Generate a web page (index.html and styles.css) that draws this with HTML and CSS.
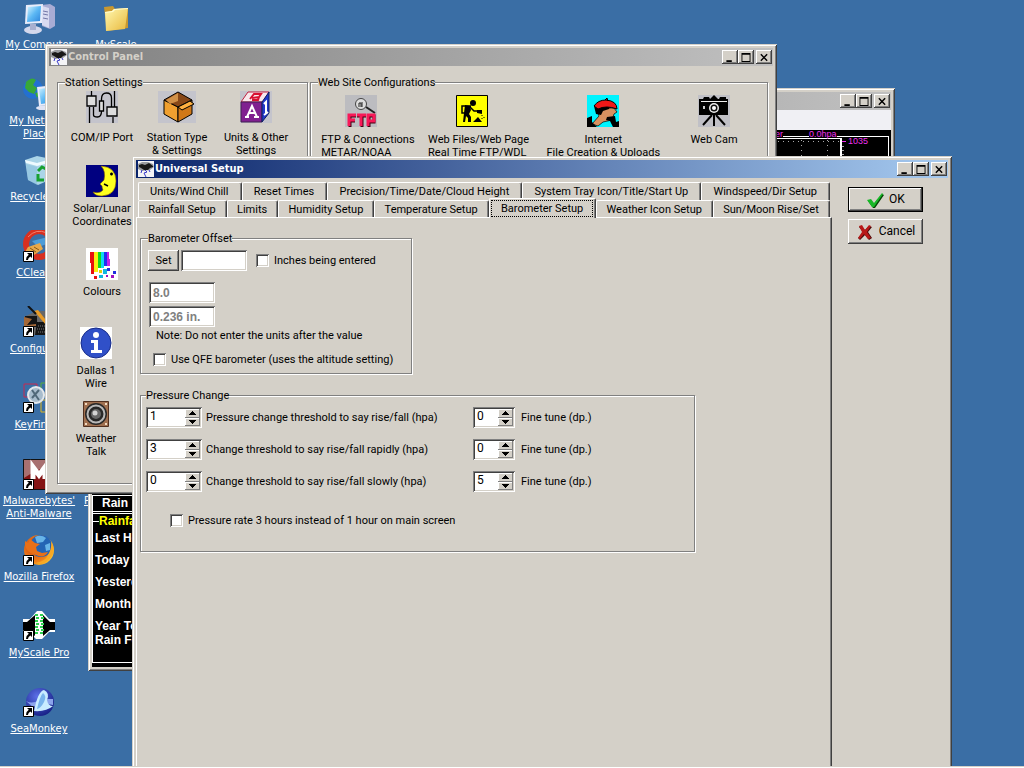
FILE: index.html
```html
<!DOCTYPE html>
<html lang="en">
<head>
<meta charset="utf-8">
<title>Universal Setup</title>
<link rel="stylesheet" href="styles.css">
</head>
<body>
<svg class="defs" aria-hidden="true">
  <symbol id="arrow" viewBox="0 0 11 11"><path fill="#fff" stroke="#000" d="M.5.5h10v10H.5z"/><path d="M4 2h5v5L7.500 5.500Q5 6.500 5 9H3Q3 5.500 5.800 3.800z"/></symbol>
  <symbol id="storm" viewBox="0 0 16 16"><path fill="#f4f4f6" d="M0 0h16v16H0z"/><path fill="#9a9ca0" d="M0 3l4-2h6l5 2 1 3-4 3-8 1-4-2z"/><path fill="#181818" d="M1 4l3-1 3 1 4-2 4 3v1l-3 1-2 2H6L3 7 1 6z"/><path fill="none" stroke="#3838c8" d="M7 9l2 2-3 1 2 4M4 9l-1 3M11 9l1 2"/></symbol>
  <symbol id="win-min" viewBox="0 0 12 10"><path d="M2 8h6v2H2z"/></symbol>
  <symbol id="win-max" viewBox="0 0 12 10"><path fill-rule="evenodd" d="M1 0h10v10H1zM2 2v7h8V2z"/></symbol>
  <symbol id="win-close" viewBox="0 0 12 10"><path fill="none" stroke="#000" stroke-width="1.600" d="M2.500 1.500l7 7M9.500 1.500l-7 7"/></symbol>
  <symbol id="up" viewBox="0 0 7 4"><path d="M3 0h1v1h1v1h1v1h1v1H0V3h1V2h1V1h1z"/></symbol>
  <symbol id="down" viewBox="0 0 7 4"><path d="M3 4h1V3h1V2h1V1h1V0H0v1h1v1h1v1h1z"/></symbol>
  <linearGradient id="screen" x1="0" y1="0" x2="1" y2="1"><stop offset="0" stop-color="#d4f4ff"/><stop offset=".5" stop-color="#5cb8f4"/><stop offset="1" stop-color="#2c84dc"/></linearGradient>
  <linearGradient id="folder" x1="0" y1="0" x2="1" y2="1"><stop offset="0" stop-color="#fff8b0"/><stop offset="1" stop-color="#e8b83c"/></linearGradient>
  <radialGradient id="navy" cx=".4" cy=".3" r=".8"><stop offset="0" stop-color="#5c70e8"/><stop offset="1" stop-color="#10187c"/></radialGradient>
  <radialGradient id="fox" cx=".35" cy=".4" r=".7"><stop offset="0" stop-color="#c84010"/><stop offset=".7" stop-color="#f08018"/><stop offset="1" stop-color="#fcc830"/></radialGradient>
</svg>

<main class="desktop">
  <nav class="shortcuts" aria-label="Desktop">
    <a class="shortcut" href="#"><svg viewBox="0 0 32 32"><path fill="#a8acd4" d="M19 3l8-1 5 3v19l-5 3-8-3z"/><path fill="#d8daf0" d="M19 4l7 2v20l-7-3z"/><path stroke="#7478a8" d="M20 9l5 1M20 12l5 1M20 16l5 1"/><ellipse cx="10" cy="28" rx="9" ry="4" fill="#d4d8ec"/><path fill="#a8b0d0" d="M7 22h6v6H7z"/><path fill="#e8ecfa" d="M3 3l17-1-1 19-17 1z"/><path fill="url(#screen)" d="M5 5l13-1-1 15-13 1z"/></svg><span>My Computer</span></a>
    <a class="shortcut" href="#"><svg viewBox="0 0 32 32"><circle cx="10" cy="11" r="10" fill="#2470d0"/><path fill="#38a838" d="M3 4q6-6 10-2l-3 5 4 3-3 6-5-2-4-4zM12 15l5-1-3 6z"/><path fill="#e8ecfa" d="M14 9l18-2v20l-16 1z"/><path fill="url(#screen)" d="M16 11l16-2v15l-14 2z"/><ellipse cx="22" cy="30" rx="9" ry="2.500" fill="#e0e4f4"/></svg><span>My Network Places</span></a>
    <a class="shortcut" href="#"><svg viewBox="0 0 32 32"><path fill="#b8e0f0" opacity=".9" d="M2 6l12-4 14 3-4 22-9 4-10-5z"/><path fill="#eefaff" d="M2 6l12 3 14-4-2 4-12 3-11-3z"/><path fill="#84bcdc" d="M3 10l11 3v18l-9-5z" opacity=".5"/><path fill="none" stroke="#18a030" stroke-width="3" d="M15 17l4-4 4 2M15 20v6h6M25 17l1 5-3 3"/></svg><span>Recycle Bin</span></a>
    <a class="shortcut" href="#"><svg viewBox="0 0 32 32"><circle cx="16" cy="14" r="13" fill="none" stroke="#d83020" stroke-width="6"/><path fill="none" stroke="#f08070" d="M5 7q8-9 19-4"/><path fill="#4c9cd8" d="M9 11l16-4 2 6-12 4z"/><path fill="#e8a848" d="M5 17l12-4 3 6-9 6-9-3z"/><path stroke="#885818" d="M7 18l6 4M11 17l5 3"/><use href="#arrow" y="21" width="11" height="11"/></svg><span>CCleaner</span></a>
    <a class="shortcut" href="#"><svg viewBox="0 0 32 32"><path fill="#686868" d="M1 11l12-6h19v24H11z"/><path fill="#151515" d="M2 10h12v11H2zM14 16h18v13H12z"/><path fill="#a46838" d="M1 11l8 2-5 6 9-1v2H1z"/><path stroke="#787878" stroke-dasharray="1 1" d="M15 20h16M14 23h17M15 26h16"/><path fill="#e89c28" d="M11 5l4-1 11 14-3 1z"/><path stroke="#111" stroke-width="2" d="M5 0l8 8"/><use href="#arrow" y="20" width="11" height="11"/></svg><span>Configure...</span></a>
    <a class="shortcut" href="#"><svg viewBox="0 0 32 32"><path fill="none" stroke="#c82850" d="M1 2h13v13H1z"/><path fill="none" stroke="#58b038" d="M18 1h13v12H18z"/><path fill="none" stroke="#e0b820" d="M18 18h13v12H18z"/><circle cx="13" cy="13" r="8" fill="#a8bccc" stroke="#e4e8ec" stroke-width="2"/><path stroke="#506878" stroke-width="2" d="M9 8l7 10M16 8L9 16"/><use href="#arrow" y="20" width="11" height="11"/></svg><span>KeyFinder</span></a>
    <a class="shortcut" href="#"><svg viewBox="0 0 32 32"><path fill="#841414" stroke="#111" d="M.5 1.500h31v30H.5z"/><path fill="#a87070" d="M1 2h30v5Q17 9 1 20z"/><path fill="none" stroke="#fff" stroke-width="5" d="M10 21V9l6 8 6-8v12"/><use href="#arrow" y="21" width="11" height="11"/></svg><span>Malwarebytes' Anti-Malware</span></a>
    <a class="shortcut" href="#"><svg viewBox="0 0 32 32"><circle cx="16" cy="16" r="15" fill="url(#fox)"/><circle cx="18" cy="12" r="11" fill="#2464b4"/><path fill="#68b4e8" d="M12 3q6-3 11 1l-3 4-6 1zM22 11l5-2v7l-4 1z"/><path fill="#e87018" d="M2 7l3 2 2-4 5 4 5 1-4 3 1 4 5 2 6-1q-4 7-12 3Q1 18 2 7z"/><path fill="#f8a824" d="M28 7q6 10-2 18-6 6-13 4 10-2 12-8 4-6 3-14z"/><use href="#arrow" y="21" width="11" height="11"/></svg><span>Mozilla Firefox</span></a>
    <a class="shortcut" href="#"><svg viewBox="0 0 32 32"><path fill="#fff" d="M0 9h7l7-8h5l7 8h6v13h-6l-7 7h-6l-7-7H0z"/><path d="M0 12h4l8-7v21l-8-6H0zM32 12h-5l-7-7v21l7-6h5z"/><path fill="none" stroke="#30d050" stroke-width="2" stroke-dasharray="3 2" d="M12 5h8M13 8h8M12 11h8M13 14h8M12 17h8M13 20h8M12 23h8"/><use href="#arrow" y="20" width="11" height="11"/></svg><span>MyScale Pro</span></a>
    <a class="shortcut" href="#"><svg viewBox="0 0 32 32"><circle cx="17" cy="16" r="14" fill="url(#navy)"/><path fill="#8ca4ec" d="M3 15q7 4 14-2h13v6q-12-3-20 2z"/><path fill="#c8ecff" d="M11 25Q15 5 21 4q6 3 3 10 1 6 6 6-7 6-19 5z"/><path fill="#78b4ec" d="M20 7q4 3 1 9-3 6-7 7Q17 10 20 7z"/><use href="#arrow" y="20" width="11" height="11"/></svg><span>SeaMonkey</span></a>
  </nav>
  <nav class="shortcuts shortcuts-second" aria-label="Desktop, second column">
    <a class="shortcut" href="#"><svg viewBox="0 0 32 32"><path fill="#c89830" d="M4 5l9-1 2 3 13-1v20L7 29z"/><path fill="url(#folder)" d="M5 10l7-1 2-2 14-1-3 21-19 2z"/><path fill="#fffcd0" d="M5 10l7-1 2-2 14-1v1l-13 1-2 2-8 1z"/></svg><span>MyScale</span></a>
    <a class="shortcut shortcut-covered" href="#"><span>P</span></a>
  </nav>

  <section class="window window-main" aria-label="Weather display">
    <header class="titlebar titlebar-inactive">
      <span class="title"></span>
      <button class="winbtn" aria-label="Minimize"><svg><use href="#win-min"/></svg></button>
      <button class="winbtn" aria-label="Maximize"><svg><use href="#win-max"/></svg></button>
      <button class="winbtn winbtn-close" aria-label="Close"><svg><use href="#win-close"/></svg></button>
    </header>
    <div class="menu-strip"></div>
    <div class="display">
      <svg class="chart" viewBox="0 0 118 180" shape-rendering="crispEdges">
        <path fill="none" stroke="#fff" d="M10 6.500h26M64 6.500h51.500V180"/>
        <path fill="none" stroke="#fff" d="M0 8.500h67"/>
        <path stroke="#fff" stroke-width="2" d="M68 8v172"/>
        <path stroke="#aaa" stroke-dasharray="1 4" d="M0 11.500h66M28.500 10v170M54.500 10v170"/>
        <path stroke="#f030f0" d="M69 11.500h4"/><path stroke="#aaa" d="M69 16.500h2M69 20.500h2M69 24.500h2"/>
        <text x="2" y="7">er</text><text x="36" y="7">0.0hpa</text><text x="75" y="14">1035</text>
      </svg>
      <div class="rain">
        <div class="rain-head">Rain</div>
        <fieldset class="rain-box"><legend>Rainfall</legend>
          <p>Last Hour</p><p>Today</p><p>Yesterday</p><p>Month</p><p>Year To<br>Rain For</p>
        </fieldset>
      </div>
    </div>
  </section>

  <section class="window window-panel" aria-label="Control Panel">
    <header class="titlebar titlebar-inactive">
      <svg class="title-icon"><use href="#storm"/></svg>
      <h2 class="title">Control Panel</h2>
      <button class="winbtn" aria-label="Minimize"><svg><use href="#win-min"/></svg></button>
      <button class="winbtn" aria-label="Maximize"><svg><use href="#win-max"/></svg></button>
      <button class="winbtn winbtn-close" aria-label="Close"><svg><use href="#win-close"/></svg></button>
    </header>
    <div class="panel-body">
      <fieldset class="group station-group">
        <legend>Station Settings</legend>
        <div class="station-grid">
          <button class="tool tool-top"><svg viewBox="0 0 32 32"><path fill="#c4c4cc" d="M0 0h32v32H0z"/><path fill="none" stroke="#000" stroke-width="1.300" d="M5.500 0v6M3.500 16v16M7.500 16v8q0 2 4 2 4 0 4-6V8q0-6 5-6t5 5v9M28.500 0v16M27 26v6"/><path fill="#ddd" stroke="#000" stroke-width="1.300" d="M1 5h9v10H1zM21 16h10v9H21zM13.500 10h4v10h-4z"/></svg><span>COM/IP Port</span></button>
          <button class="tool tool-top"><svg class="wide" viewBox="0 0 38 32"><path fill="#c4c4cc" d="M0 0h38v32H0z"/><path fill="#f0a030" stroke="#000" d="M6 9l14 7v15L6 23z"/><path fill="#d07818" stroke="#000" d="M20 16l14-7v14l-14 8z"/><path fill="#884818" stroke="#000" d="M6 9l14-8 14 8-14 7z"/><path fill="#d09048" d="M8 9l12-7v8l-8 3z"/><path fill="#ffb040" stroke="#000" d="M20 16l12-6 4 3-12 6z"/></svg><span>Station Type<br>&amp; Settings</span></button>
          <button class="tool tool-top"><svg viewBox="0 0 32 32"><path fill="#c4c4cc" d="M0 0h32v32H0z"/><path fill="#f8e8ec" stroke="#c02040" d="M1 11l7-10h21l-6 10z"/><path fill="none" stroke="#d81030" stroke-width="2" d="M10 8l4-5h7l-2 3-7 1M19 6l-1 3h-6"/><path fill="#802090" stroke="#402050" d="M1 11h21v20H1z"/><path fill="#2038c8" stroke="#102060" d="M22 11l7-10v21l-7 9z"/><path fill="none" stroke="#fff" stroke-width="2" d="M7 26l5-11 5 11M9 22h6M5 26h4M14 26h5M24 13l2-2v12M24 24l4-3"/></svg><span>Units &amp; Other<br>Settings</span></button>
          <button class="tool row-start"><svg viewBox="0 0 32 32"><path fill="#000080" d="M0 0h32v32H0z"/><path fill="#ffff20" d="M15 1q15 1 15 15 0 14-14 15-7 0-9-4 7 2 10-2-1-2-1-4l-2-2 4-4q2-9-3-14z" stroke="#806000" stroke-width=".6"/><path stroke="#000" stroke-width="1.500" d="M24 9h3M25.500 7.500v3M18 19l4 2"/></svg><span>Solar/Lunar<br>Coordinates</span></button>
          <button class="tool row-start"><svg viewBox="0 0 32 32" shape-rendering="crispEdges"><path fill="#fff" d="M0 0h32v32H0z"/><path fill="#e81010" d="M4 4h4v22H5z"/><path fill="#f8f010" d="M8 4h4v20H8z"/><path fill="#10d820" d="M12 4h3v16h-3z"/><path fill="#10d8f0" d="M15 4h3v16h-3z"/><path fill="#2030f0" d="M18 4h3v14h-3z"/><path fill="#c020e8" d="M21 4h2l1 14h-3z"/><path fill="#e81010" d="M8 28h3v3H8z"/><path fill="#e0d010" d="M13 22h3v3h-3z"/><path fill="#10b8e0" d="M17 21h4v5h-4zM13 27h4v3h-4z"/><path fill="#2030e0" d="M21 20h3v3h-3zM27 23h3v3h-3z"/><path fill="#a010c0" d="M25 27h3v3h-3zM20 27h2v2h-2z"/></svg><span>Colours</span></button>
          <button class="tool row-start tool-narrow"><svg viewBox="0 0 32 32"><path fill="#fff" d="M0 0h32v32H0z"/><circle cx="16" cy="16" r="15" fill="#3050c8" stroke="#182c88"/><circle cx="16" cy="8" r="3" fill="#fff"/><path fill="#fff" d="M11 13h7v10h4v3H11v-3h3v-7h-3z"/></svg><span>Dallas 1<br>Wire</span></button>
          <button class="tool row-start tool-narrow"><svg class="small" viewBox="0 0 26 26"><path fill="#a07050" stroke="#503020" d="M.5.500h25v25H.5z"/><circle cx="13" cy="13" r="11" fill="#282828"/><circle cx="13" cy="13" r="8.500" fill="none" stroke="#b8b8b8" stroke-width="2"/><circle cx="13" cy="13" r="5" fill="#686868"/><circle cx="12" cy="12" r="2.500" fill="#d4d4d4"/><path stroke="#f0d8c0" stroke-width="2" d="M2 3h2M22 3h2M2 23h2M22 23h2"/></svg><span>Weather<br>Talk</span></button>
        </div>
      </fieldset>
      <fieldset class="group web-group">
        <legend>Web Site Configurations</legend>
        <div class="web-grid">
          <button class="tool tool-left"><svg viewBox="0 0 32 32"><path fill="#bcbcc0" d="M0 0h32v32H0z"/><circle cx="16" cy="9" r="5.500" fill="#ddd" stroke="#444"/><path stroke="#222" fill="none" d="M14 12V8h2v4M17 7v5"/><path stroke="#222" stroke-width="2" d="M21 12l9 6"/><path fill="none" stroke="#400010" stroke-width="3" d="M5 32V21h6M5 26h5M12 21h9M17 21v11M24 32V21h5v6h-5"/><path fill="none" stroke="#f81858" stroke-width="3" d="M4 31V20h7M4 25h6M12 20h9M16 20v11M23 31V20h6v6h-6"/></svg><span>FTP &amp; Connections<br>METAR/NOAA</span></button>
          <button class="tool tool-left"><svg viewBox="0 0 32 32"><path fill="#ff0" stroke="#000" d="M.5.500h31v31H.5z"/><circle cx="17" cy="8" r="3"/><path d="M9 10l5 1 1 4-2 4 2 3v5h-3v-4l-2-2-1 6H7l1-9zM17 27l5-5 4 5zM21 15h5v4l-5-1z"/><path fill="none" stroke="#000" stroke-width="1.500" d="M15 11H6v7h4M13 11l5 5h6"/><path stroke="#000" stroke-dasharray="1 2" d="M26 20v6M28 22v3"/></svg><span>Web Files/Web Page<br>Real Time FTP/WDL</span></button>
          <button class="tool"><svg viewBox="0 0 32 32"><path fill="#00f4ff" d="M0 0h32v32H0z"/><path fill="#d89060" stroke="#000" stroke-width=".7" d="M9 13h18l3 4-3 2-2 6-9 2-5 4-6-2 7-8z"/><path d="M7 11h16l-1 3-6 2-2 4-5-1zM0 23l5-2v6l5 5H0zM20 22l8-1 1 6 3-1v6h-6l-3-6-4-1z"/><path fill="#f01818" stroke="#000" d="M7 11q4-6 12-6 11 1 11 9-11-4-19 0zM18 5l2-2 1 3"/></svg><span>Internet<br>File Creation &amp; Uploads</span></button>
          <button class="tool"><svg viewBox="0 0 32 32"><path fill="#c0c0c6" d="M0 0h32v32H0z"/><path d="M1 4h4l1-2h5l1 2 4-4 4 4h1l1-2h6v2h2v16H1z"/><path stroke="#eee" d="M3 6.500h26"/><circle cx="16" cy="13" r="5" fill="#eee"/><circle cx="16" cy="13" r="3.500" fill="#111"/><circle cx="16" cy="13" r="2" fill="#fff"/><path fill="#ccc" d="M5 11h2v3H5z"/><path stroke="#000" stroke-width="2" d="M14 20L5 30M16 20v11M18 20l9 10"/></svg><span>Web Cam</span></button>
        </div>
      </fieldset>
    </div>
  </section>

  <section class="window window-setup" aria-label="Universal Setup">
    <header class="titlebar titlebar-active">
      <svg class="title-icon"><use href="#storm"/></svg>
      <h1 class="title">Universal Setup</h1>
      <button class="winbtn" aria-label="Minimize"><svg><use href="#win-min"/></svg></button>
      <button class="winbtn" aria-label="Maximize"><svg><use href="#win-max"/></svg></button>
      <button class="winbtn winbtn-close" aria-label="Close"><svg><use href="#win-close"/></svg></button>
    </header>
    <div class="setup-body">
      <div class="tabbed">
        <div class="tabs" role="tablist" aria-label="Setup pages">
          <div class="tab-row" role="presentation">
            <button class="tab" role="tab">Units/Wind Chill</button><button class="tab" role="tab">Reset Times</button><button class="tab" role="tab">Precision/Time/Date/Cloud Height</button><button class="tab" role="tab">System Tray Icon/Title/Start Up</button><button class="tab" role="tab">Windspeed/Dir Setup</button>
          </div>
          <div class="tab-row" role="presentation">
            <button class="tab" role="tab">Rainfall Setup</button><button class="tab" role="tab">Limits</button><button class="tab" role="tab">Humidity Setup</button><button class="tab" role="tab">Temperature Setup</button><button class="tab tab-selected" role="tab" aria-selected="true"><span>Barometer Setup</span></button><button class="tab" role="tab">Weather Icon Setup</button><button class="tab" role="tab">Sun/Moon Rise/Set</button>
          </div>
        </div>
        <div class="page" role="tabpanel">
          <fieldset class="group offset-group">
            <legend>Barometer Offset</legend>
            <div class="offset-row">
              <button class="push set-button">Set</button>
              <input class="field" type="text" aria-label="Barometer offset">
              <label class="check"><input type="checkbox">Inches being entered</label>
            </div>
            <div class="readouts">
              <input class="field" type="text" value="8.0" aria-label="Offset in hpa" disabled>
              <input class="field" type="text" value="0.236 in." aria-label="Offset in inches" disabled>
            </div>
            <p class="note">Note: Do not enter the units after the value</p>
            <label class="check qfe"><input type="checkbox">Use QFE barometer (uses the altitude setting)</label>
          </fieldset>
          <fieldset class="group pressure-group">
            <legend>Pressure Change</legend>
            <div class="thresholds">
              <div class="spin"><input id="rise" type="text" value="1"><span class="arrows"><button aria-label="Up"><svg><use href="#up"/></svg></button><button aria-label="Down"><svg><use href="#down"/></svg></button></span></div>
              <label for="rise">Pressure change threshold to say rise/fall (hpa)</label>
              <div class="spin"><input id="rise-fine" type="text" value="0"><span class="arrows"><button aria-label="Up"><svg><use href="#up"/></svg></button><button aria-label="Down"><svg><use href="#down"/></svg></button></span></div>
              <label class="fine" for="rise-fine">Fine tune (dp.)</label>
              <div class="spin"><input id="rapid" type="text" value="3"><span class="arrows"><button aria-label="Up"><svg><use href="#up"/></svg></button><button aria-label="Down"><svg><use href="#down"/></svg></button></span></div>
              <label for="rapid">Change threshold to say rise/fall rapidly (hpa)</label>
              <div class="spin"><input id="rapid-fine" type="text" value="0"><span class="arrows"><button aria-label="Up"><svg><use href="#up"/></svg></button><button aria-label="Down"><svg><use href="#down"/></svg></button></span></div>
              <label class="fine" for="rapid-fine">Fine tune (dp.)</label>
              <div class="spin"><input id="slow" type="text" value="0"><span class="arrows"><button aria-label="Up"><svg><use href="#up"/></svg></button><button aria-label="Down"><svg><use href="#down"/></svg></button></span></div>
              <label for="slow">Change threshold to say rise/fall slowly (hpa)</label>
              <div class="spin"><input id="slow-fine" type="text" value="5"><span class="arrows"><button aria-label="Up"><svg><use href="#up"/></svg></button><button aria-label="Down"><svg><use href="#down"/></svg></button></span></div>
              <label class="fine" for="slow-fine">Fine tune (dp.)</label>
            </div>
            <label class="check rate"><input type="checkbox">Pressure rate 3 hours instead of 1 hour on main screen</label>
          </fieldset>
        </div>
      </div>
      <div class="actions">
        <button class="push action action-default"><svg viewBox="0 0 18 16"><path fill="#064806" d="M2 9l3-1 3 4L16 2l2 1L9 16H7z"/><path fill="#18b828" d="M1 8l4-1 3 4 8-10 1 1L8 15H6z"/></svg>OK</button>
        <button class="push action"><svg viewBox="0 0 18 16"><path fill="#480808" d="M4 2l5 4 4-4 3 1-4 5 4 6-3 2-4-5-5 5-2-2 5-6-4-5z"/><path fill="#b81818" d="M3 2l3-1 3 5 4-5 2 1-4 6 4 6-3 1-4-5-4 5-2-1 4-6z"/></svg>Cancel</button>
      </div>
    </div>
  </section>
  <div class="taskbar"></div>
</main>
</body>
</html>
```
FILE: styles.css
```css
:root {
  --face: #d4d0c8;
  --ui: Roboto, "Liberation Sans", Arial, sans-serif;
  --bold: "Liberation Sans", Arial, sans-serif;
  --shell: "DejaVu Sans", sans-serif;
  --caption: "DejaVu Sans Condensed", "DejaVu Sans", sans-serif;
}
* { box-sizing: border-box; }
body { margin: 0; background: #3a6ea5; font: 11px/13px var(--ui); color: #000; }
button, input { font: inherit; color: inherit; border-radius: 0; margin: 0; }
button { border: 0; padding: 0; background: none; }
fieldset { margin: 0; padding: 0; border: 0; min-width: 0; }
h1, h2, p { margin: 0; font: inherit; }
svg { display: block; flex: none; }
.defs { position: absolute; width: 0; height: 0; }
.desktop { position: relative; height: 100vh; overflow: hidden; }

/* desktop shortcuts */
.shortcuts { position: absolute; top: 2px; left: 0; width: 78px; display: grid; grid-auto-rows: 76px; }
.shortcuts-second { left: 78px; width: 76px; }
.shortcut { display: flex; flex-direction: column; align-items: center; gap: 4px; color: #fff; text-align: center; font: 10px/13px var(--shell); text-decoration: underline; }
.shortcut svg { width: 32px; height: 32px; }
.shortcut-covered { grid-row: 7; align-items: flex-start; padding: 36px 0 0 6px; }

/* window frame */
.window { position: absolute; display: flex; flex-direction: column; padding: 4px; background: var(--face);
  box-shadow: inset 1px 1px var(--face), inset -1px -1px #404040, inset 2px 2px #fff, inset -2px -2px #808080; }
.window-main { left: 88px; right: 129px; top: 88px; height: 583px; }
.window-panel { left: 45px; right: 247px; top: 44px; }
.window-setup { left: 132px; right: 72px; top: 156px; bottom: -4px; }
.titlebar { display: flex; align-items: center; height: 18px; padding: 0 1px 0 2px; flex: none; }
.titlebar-active { background: linear-gradient(90deg, #0a246a, #a6caf0); color: #fff; }
.titlebar-inactive { background: linear-gradient(90deg, #808080, #c0c0c0); color: var(--face); }
.title-icon { width: 16px; height: 16px; }
.title { flex: 1; padding-left: 1px; font: bold 11px/16px var(--caption); }
.winbtn { width: 16px; height: 14px; padding: 2px; background: var(--face);
  box-shadow: inset -1px -1px #404040, inset 1px 1px #fff, inset -2px -2px #808080; }
.winbtn svg { width: 12px; height: 9px; }
.winbtn-close { margin-left: 2px; }

/* groups */
.group { border: 1px solid #808080; box-shadow: 1px 1px #fff, inset 1px 1px #fff; }
.group > legend { margin-left: 7px; padding: 0; background: var(--face); }

/* control panel */
.panel-body { display: flex; gap: 2px; padding: 10px 5px 6px 8px; }
.station-group { width: 251px; }
.web-group { flex: 1; }
.station-grid { display: grid; grid-template-columns: 88px 62px 96px; grid-template-rows: 74px 83px 79px 74px 82px; padding-top: 2px; }
.row-start { grid-column: 1; }
.web-grid { display: grid; grid-template-columns: 114fr 108fr 142fr 80fr; padding: 6px 13px 0 0; }
.tool { display: flex; flex-direction: column; align-items: center; justify-content: flex-start; gap: 5px; white-space: nowrap; }
.tool svg { width: 32px; height: 32px; }
.tool svg.wide { width: 38px; }
.tool svg.small { width: 26px; height: 26px; }
.tool-top { gap: 8px; }
.tool-narrow { padding-right: 12px; }
.web-grid .tool { gap: 6px; }
.tool-left { text-align: left; }
.tool-left svg { margin-right: 14px; }

/* weather display */
.menu-strip { height: 20px; background: #f0f0f4; flex: none; }
.display { flex: 1; display: flex; flex-direction: column; align-items: flex-end; justify-content: space-between; background: #000; color: #fff; }
.chart { width: 118px; height: 180px; }
.chart text { font: 9px var(--bold); fill: #f030f0; }
.rain { align-self: stretch; font: bold 12px/14px var(--bold); border: 1px solid #fff; border-right: 0; margin-bottom: 4px; }
.rain-head { padding: 0 0 1px 9px; border-bottom: 3px double #fff; }
.rain-box { height: 148px; padding-left: 2px; border-top: 1px solid #fff; }
.rain-box legend { margin-left: 4px; padding: 0; color: #ff0; }
.rain-box p { margin: 3px 0 8px; }

/* universal setup */
.setup-body { flex: 1; display: flex; gap: 16px; padding: 4px 25px 0 0; }
.tabbed { flex: 1; display: flex; flex-direction: column; }
.tabs { margin-bottom: -1px; }
.tab-row { display: flex; padding: 0 2px; }
.tab { flex: 1 1 auto; height: 18px; padding-right: 1px; background: var(--face); white-space: nowrap;
  border-top: 1px solid #fff; border-left: 1px solid #fff; border-right: 1px solid #404040; border-radius: 2px 2px 0 0;
  box-shadow: inset -1px 0 #808080; }
.tab-selected { position: relative; height: 20px; margin-top: -2px; padding: 1px 2px 1px 1px; }
.tab-selected span { display: block; height: 17px; padding: 1px 0; border: 1px dotted #000; }
.page { flex: 1; display: flex; flex-direction: column; gap: 15px; align-items: flex-start; padding: 14px 3px 0;
  border-top: 1px solid #fff; border-left: 1px solid #fff; border-right: 1px solid #404040; box-shadow: inset -1px 0 #808080; }
.page .group > legend { margin-left: 0; }
.actions { display: flex; flex-direction: column; gap: 7px; width: 75px; padding-top: 5px; }
.push { background: var(--face); box-shadow: inset -1px -1px #404040, inset 1px 1px #fff, inset -2px -2px #808080; }
.action { display: flex; align-items: center; justify-content: center; gap: 5px; height: 25px; font-size: 12px; }
.action svg { width: 18px; height: 16px; }
.action-default { border: 1px solid #000; }

.field, .spin { background: #fff; border: 0; box-shadow: inset 1px 1px #808080, inset -1px -1px #fff, inset 2px 2px #404040, inset -2px -2px var(--face); }
.field { width: 66px; height: 21px; padding: 3px 4px; }
.field:disabled { font: bold 12px/14px var(--bold); color: #808080; }
.offset-group { width: 272px; padding: 5px 7px 7px; }
.offset-row { display: flex; align-items: center; gap: 2px; }
.offset-row .check { margin-left: 7px; }
.set-button { width: 31px; height: 21px; }
.readouts { display: flex; flex-direction: column; gap: 3px; padding: 11px 0 2px 1px; }
.note { padding-left: 8px; }
.check { display: flex; align-items: center; gap: 5px; }
.check input { appearance: none; width: 13px; height: 13px; background: #fff;
  box-shadow: inset 1px 1px #808080, inset -1px -1px #fff, inset 2px 2px #404040, inset -2px -2px var(--face); }
.qfe { padding: 11px 0 0 5px; }
.pressure-group { width: 555px; padding: 5px 5px 24px; }
.thresholds { display: grid; grid-template-columns: 56px 263px 42px auto; gap: 11px 4px; align-items: center; }
.fine { padding-left: 2px; }
.rate { padding: 22px 0 0 24px; }
.spin { display: flex; height: 21px; padding: 2px; }
.spin input { flex: 1; min-width: 0; padding: 0 2px 2px; border: 0; background: transparent; font-size: 12px; }
.arrows { display: flex; flex-direction: column; width: 15px; }
.arrows button { flex: 1; display: flex; align-items: center; justify-content: center; background: var(--face);
  box-shadow: inset -1px -1px #808080, inset 1px 1px #fff; }
.arrows svg { width: 7px; height: 4px; }

.taskbar { position: absolute; left: 0; right: 0; bottom: 0; height: 2px; background: #fff; border-top: 1px solid var(--face); }
```
